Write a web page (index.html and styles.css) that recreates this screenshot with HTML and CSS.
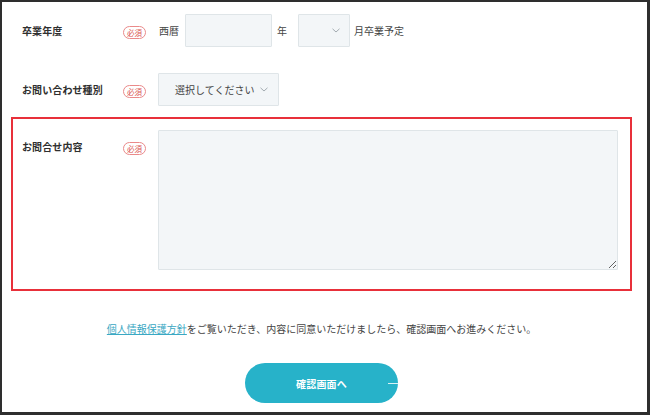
FILE: index.html
```html
<!DOCTYPE html>
<html lang="ja">
<head>
<meta charset="utf-8">
<title>お問い合わせ</title>
<link rel="stylesheet" href="styles.css">
</head>
<body>
<div class="frame">
  <form class="form">
    <div class="row row-first">
      <div class="label">卒業年度</div>
      <div class="badge-cell"><span class="badge">必須</span></div>
      <div class="field field-inline">
        <span class="unit unit-pre">西暦</span>
        <span class="input year"></span>
        <span class="unit unit-year">年</span>
        <span class="select month"><svg class="chev" width="8" height="5" viewBox="0 0 8 5"><path d="M0.5 0.8 L4 4 L7.5 0.8" fill="none" stroke="#9aa3a8" stroke-width="0.9"/></svg></span>
        <span class="unit unit-post">月卒業予定</span>
      </div>
    </div>
    <div class="row row-second">
      <div class="label">お問い合わせ種別</div>
      <div class="badge-cell"><span class="badge">必須</span></div>
      <div class="field">
        <span class="select kind"><span class="select-text">選択してください</span><svg class="chev" width="8" height="5" viewBox="0 0 8 5"><path d="M0.5 0.8 L4 4 L7.5 0.8" fill="none" stroke="#9aa3a8" stroke-width="0.9"/></svg></span>
      </div>
    </div>
    <div class="row row-error">
      <div class="label">お問合せ内容</div>
      <div class="badge-cell"><span class="badge">必須</span></div>
      <div class="field">
        <textarea class="textarea"></textarea>
      </div>
    </div>
    <p class="agree"><a href="#" class="link">個人情報保護方針</a>をご覧いただき、内容に同意いただけましたら、確認画面へお進みください。</p>
    <div class="actions">
      <button type="button" class="btn">確認画面へ</button>
    </div>
  </form>
</div>
</body>
</html>
```

FILE: styles.css
```css
* { box-sizing: border-box; }
html, body { margin: 0; padding: 0; background: #fff; }
body {
  font-family: "Noto Sans CJK JP", "Noto Sans", sans-serif;
  color: #3a3a3a;
  font-size: 10px;
}
.frame {
  width: 650px;
  height: 415px;
  border-style: solid;
  border-color: #2e2e2e;
  border-width: 2px 3px 3px 2px;
  overflow: hidden;
}
.form {
  padding: 0 15px 0 9px;
}
.row {
  display: grid;
  grid-template-columns: 101px 35px 1fr;
  border: 2px solid transparent;
  padding: 11px 12px 11px 9px;
}
.row-first { padding-top: 10px; }
.row-second { padding-bottom: 9px; }
.row-error {
  border-color: #e8303a;
  padding-bottom: 19px;
}
.label {
  font-weight: 700;
  font-size: 10px;
  line-height: 15px;
  padding-top: 9px;
  color: #2f2f2f;
  letter-spacing: 0.1px;
}
.badge-cell { padding-top: 10px; }
.badge {
  display: inline-flex;
  align-items: center;
  justify-content: center;
  width: 23px;
  height: 13px;
  border: 1px solid #ea8a8a;
  border-radius: 7px;
  color: #d9534f;
  font-size: 7.5px;
  line-height: 1;
}
.field { display: flex; align-items: flex-start; }
.field-inline { align-items: center; height: 33px; }
.unit { font-size: 10px; color: #444; line-height: 15px; }
.unit-pre { margin-left: 1px; margin-right: 6px; }
.unit-year { margin: 0 11px 0 5px; }
.unit-post { margin-left: 4px; }
.input, .select, .textarea {
  background: #f3f6f8;
  border: 1px solid #dfe5e8;
  border-radius: 1px;
}
.input.year { width: 87px; height: 33px; }
.select {
  display: flex;
  align-items: center;
  height: 33px;
  position: relative;
}
.select.month { width: 52px; justify-content: flex-end; padding-right: 9px; }
.select.kind { width: 121px; padding-left: 16px; justify-content: space-between; padding-right: 10px; }
.select-text { font-size: 10px; color: #444; line-height: 15px; }
.chev { display: block; }
.textarea {
  display: block;
  width: 460px;
  height: 140px;
  resize: both;
  margin: 0;
  padding: 4px;
  font: inherit;
  outline: none;
}
.agree {
  margin: 30px 0 0 0;
  text-align: center;
  font-size: 10px;
  line-height: 16px;
  color: #444;
}
.link { color: #3aa8c3; text-decoration: underline; }
.actions {
  display: flex;
  justify-content: center;
  margin-top: 26px;
}
.btn {
  position: relative;
  width: 153px;
  height: 40px;
  border: none;
  border-radius: 20px;
  background: #27b2c9;
  color: #fff;
  font-family: inherit;
  font-size: 10px;
  font-weight: 700;
  letter-spacing: 0.2px;
  padding: 0;
  cursor: pointer;
}
.btn::after {
  content: "";
  position: absolute;
  right: 0;
  top: 20px;
  width: 10px;
  height: 1px;
  background: #d8f1f5;
}
```
